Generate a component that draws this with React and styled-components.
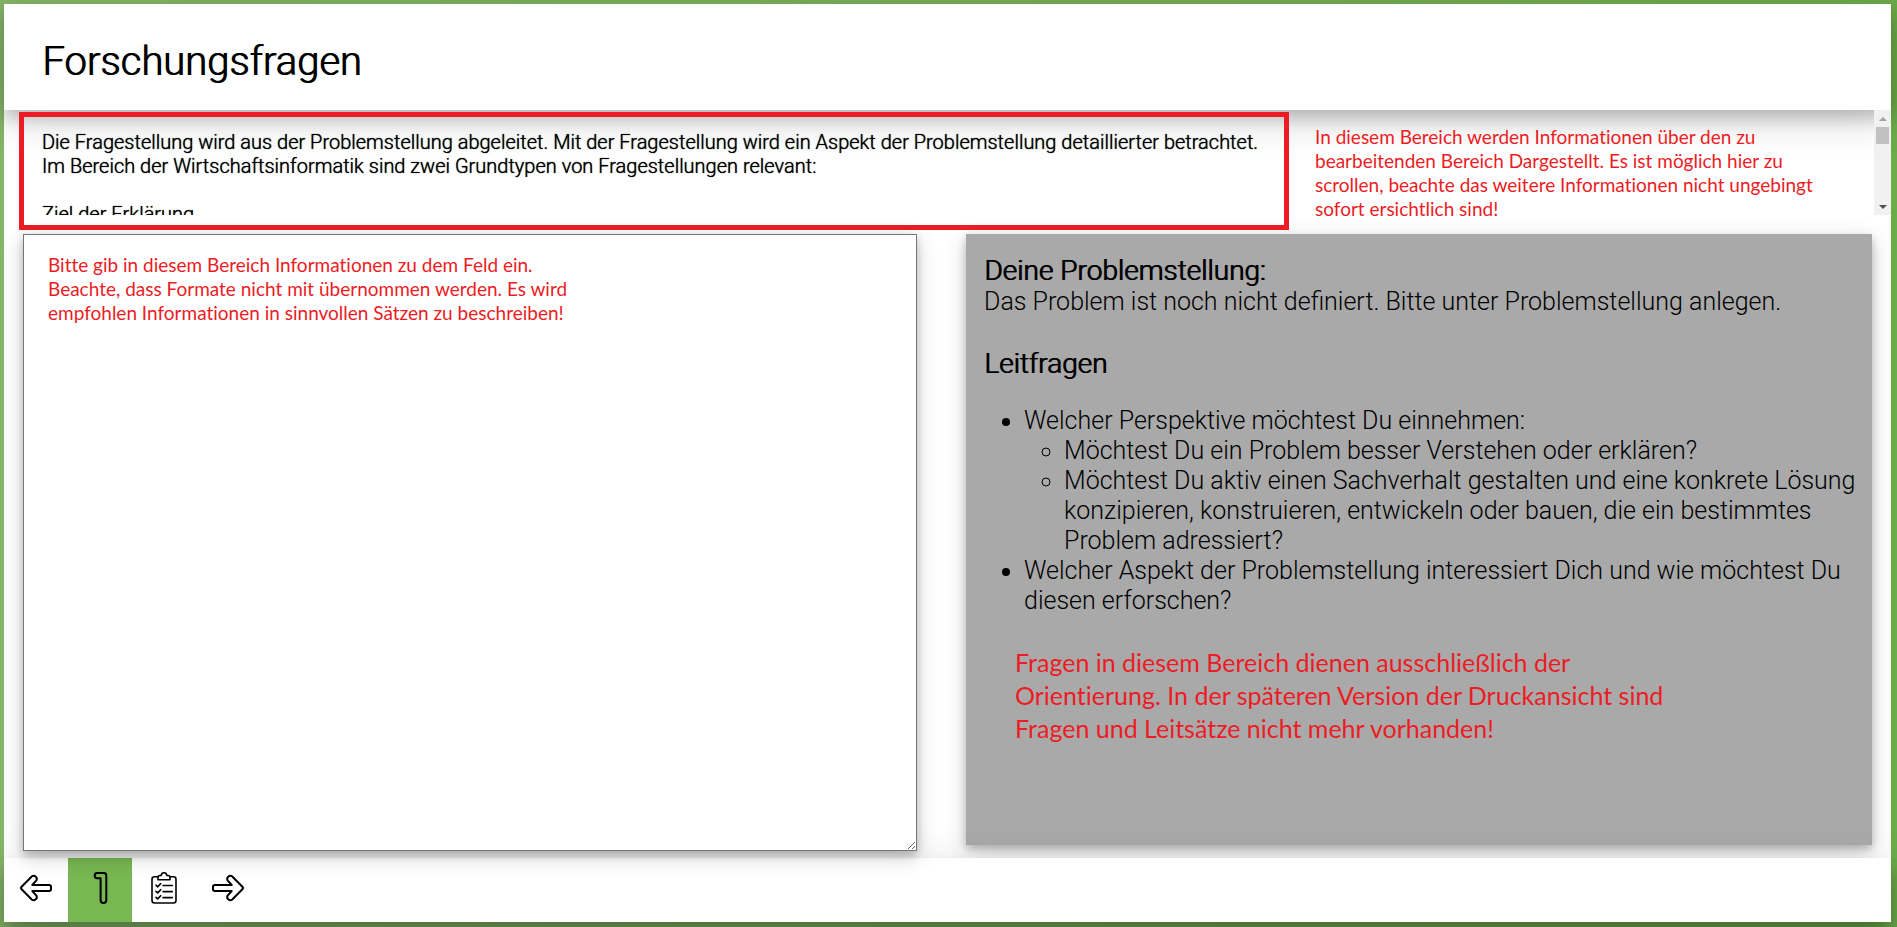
import React from "react";
import styled, { createGlobalStyle } from "styled-components";

const RED = "#ed1c24";
const softShadow = "0 4px 8px 0 rgba(0,0,0,0.2), 0 6px 20px 0 rgba(0,0,0,0.19)";
const headerShadow = "0 8px 16px 0 rgba(0,0,0,0.2), 0 12px 40px 0 rgba(0,0,0,0.15)";
const footerShadow = "0 12px 16px 0 rgba(0,0,0,0.24), 0 17px 50px 0 rgba(0,0,0,0.19)";

const GlobalStyle = createGlobalStyle`
  *, *::before, *::after { box-sizing: border-box; }
  body {
    margin: 0;
    font-family: Roboto, "Liberation Sans", sans-serif;
    color: #000;
    background: linear-gradient(to right, #84b568, #6cab4a);
  }
`;

const Page = styled.div`
  height: 100vh;
  padding: 4px 6px 5px 4px;
`;

const Sheet = styled.main`
  height: 100%;
  display: grid;
  grid-template-rows: 106px 124px minmax(0, 1fr) 64px;
  background: #fff;
`;

const Header = styled.header`
  display: flex;
  align-items: center;
  padding: 10px 38px 0;
  background: #fff;
  box-shadow: ${headerShadow};
`;

const Title = styled.h1`
  margin: 0;
  font-size: 40px;
  line-height: 48px;
  font-weight: 300;
  text-shadow: 1px 0 0 #000;
`;

const Intro = styled.section`
  position: relative;
`;

const IntroScroll = styled.div`
  height: 105px;
  overflow-y: auto;
  scrollbar-width: none;
  padding: 20px 38px 0;
  font-size: 20px;
  line-height: 24px;
  font-weight: 300;
  text-shadow: 0 0 1px #000;
`;

const IntroText = styled.div`
  min-height: 400px;
  p { margin: 0 0 24px; }
`;

const ScrollTrack = styled.div`
  position: absolute;
  top: 0;
  right: 0;
  width: 17px;
  height: 105px;
  display: flex;
  flex-direction: column;
  align-items: center;
  background: #f1f1f1;
`;

const ScrollArrow = styled.span`
  width: 17px;
  height: 17px;
  display: grid;
  place-items: center;
  margin-top: ${(p) => (p.$down ? "auto" : "0")};

  &::before {
    content: "";
    border: 4px solid transparent;
    border-top: ${(p) => (p.$down ? "4px solid #505050" : "0")};
    border-bottom: ${(p) => (p.$down ? "0" : "4px solid #a3a3a3")};
  }
`;

const ScrollThumb = styled.span`
  width: 13px;
  height: 17px;
  background: #c1c1c1;
`;

const Frame = styled.div`
  position: absolute;
  top: 2px;
  left: 15px;
  width: 1270px;
  height: 118px;
  border: 5px solid ${RED};
  pointer-events: none;
`;

const Note = styled.p`
  margin: 0;
  font-family: Lato, "Liberation Sans", sans-serif;
  font-variant-ligatures: none;
  color: ${RED};
  font-size: ${(p) => (p.$large ? 25 : 19)}px;
  line-height: ${(p) => (p.$large ? 33 : 24)}px;
  font-weight: 400;
`;

const IntroNote = styled(Note)`
  position: absolute;
  top: 15px;
  left: 1311px;
  width: 540px;
`;

const Work = styled.section`
  display: grid;
  grid-template-columns: 894px minmax(0, 1fr);
  gap: 49px;
  padding: 0 19px;
`;

const Answer = styled.textarea`
  position: relative;
  z-index: 1;
  height: 617px;
  padding: 18px 24px;
  border: 1px solid #767676;
  border-radius: 0;
  background: #fff;
  box-shadow: ${softShadow};
  resize: both;
  outline: none;
  font-family: Lato, "Liberation Sans", sans-serif;
  font-variant-ligatures: none;
  font-size: 19px;
  line-height: 24px;
  color: ${RED};
`;

const Guide = styled.aside`
  height: 611px;
  padding: 20px 12px 20px 18px;
  background: #a9a9a9;
  box-shadow: ${softShadow};
  font-size: 25px;
  line-height: 30px;
  font-weight: 300;

  ul { margin: 0; padding-left: 40px; }
`;

const GuideText = styled.p`
  margin: 0;
`;

const GuideTitle = styled.h2`
  margin: ${(p) => (p.$spaced ? "30px 0 26px" : "0")};
  font-size: 28px;
  line-height: 33px;
  font-weight: 300;
  text-shadow: 1px 0 0 #000;
`;

const GuideNote = styled.div`
  padding: 30px 31px 0;
`;

const Footer = styled.nav`
  display: flex;
  background: #fff;
  box-shadow: ${footerShadow};
`;

const NavButton = styled.button`
  width: 64px;
  height: 64px;
  padding: 0 0 4px;
  border: 0;
  display: grid;
  place-items: center;
  background: ${(p) => (p.$active ? "#77b852" : "transparent")};
`;

const Icon = ({ children, weight = 2 }) => (
  <svg width="32" height="32" viewBox="0 0 32 32" fill="none" stroke="#000" strokeWidth={weight} strokeLinecap="round" strokeLinejoin="round" aria-hidden="true">
    {children}
  </svg>
);

const arrow =
  "M1.600 14.700 L11.700 4.500 Q13.700 2.800 15.800 4.700 Q17.800 6.700 16 8.900 L12.300 13 H29.200 Q31 13 31 14.700 V17.300 Q31 19 29.200 19 H12.300 L16 23.100 Q17.800 25.300 15.800 27.300 Q13.700 29.200 11.700 27.500 L1.600 17.300 Q0.500 16 1.600 14.700 Z";

const ArrowLeft = () => <Icon><path d={arrow} /></Icon>;
const ArrowRight = () => <Icon><path d={arrow} transform="matrix(-1 0 0 1 32 0)" /></Icon>;
const NumberOne = () => (
  <Icon>
    <path d="M20 1 H13 C9.900 1 9.900 6.200 13 6.200 H16.600 V28 C16.600 32 22.300 32 22.300 28 V3.500 Q22.300 1 20 1 Z" />
  </Icon>
);
const Clipboard = () => (
  <Icon weight={1.6}>
    <path d="M10 4.700 H6.500 Q4 4.700 4 7.200 V28.500 Q4 31 6.500 31 H25.500 Q28 31 28 28.500 V7.200 Q28 4.700 25.500 4.700 H22" />
    <path d="M10 7.700 V5.500 Q10 3.500 12 3.500 H13.200 Q13.500 0.800 16 0.800 Q18.500 0.800 18.800 3.500 H20 Q22 3.500 22 5.500 V7.700 Z" />
    <path d="M8 13.200 l1.700 1.600 l3 -3.200 M15 13.500 H24.300 M8 19.300 l1.700 1.600 l3 -3.200 M15 19.600 H24.300 M8 25.300 l1.700 1.600 l3 -3.200 M15 25.600 H24.300" />
  </Icon>
);

export default function App() {
  return (
    <>
      <GlobalStyle />
      <Page>
        <Sheet>
          <Header><Title>Forschungsfragen</Title></Header>
          <Intro>
            <IntroScroll tabIndex={0}>
              <IntroText>
                <p>
                  Die Fragestellung wird aus der Problemstellung abgeleitet. Mit der Fragestellung wird ein Aspekt der Problemstellung detaillierter betrachtet.<br />
                  Im Bereich der Wirtschaftsinformatik sind zwei Grundtypen von Fragestellungen relevant:
                </p>
                <p>Ziel der Erklärung</p>
              </IntroText>
            </IntroScroll>
            <ScrollTrack aria-hidden="true">
              <ScrollArrow />
              <ScrollThumb />
              <ScrollArrow $down />
            </ScrollTrack>
            <Frame />
            <IntroNote>
              In diesem Bereich werden Informationen über den zu<br />
              bearbeitenden Bereich Dargestellt. Es ist möglich hier zu<br />
              scrollen, beachte das weitere Informationen nicht ungebingt<br />
              sofort ersichtlich sind!
            </IntroNote>
          </Intro>
          <Work>
            <Answer
              aria-label="Forschungsfragen"
              spellCheck={false}
              defaultValue={"Bitte gib in diesem Bereich Informationen zu dem Feld ein.\nBeachte, dass Formate nicht mit übernommen werden. Es wird\nempfohlen Informationen in sinnvollen Sätzen zu beschreiben!"}
            />
            <Guide>
              <GuideTitle>Deine Problemstellung:</GuideTitle>
              <GuideText>Das Problem ist noch nicht definiert. Bitte unter Problemstellung anlegen.</GuideText>
              <GuideTitle $spaced>Leitfragen</GuideTitle>
              <ul>
                <li>
                  Welcher Perspektive möchtest Du einnehmen:
                  <ul>
                    <li>Möchtest Du ein Problem besser Verstehen oder erklären?</li>
                    <li>Möchtest Du aktiv einen Sachverhalt gestalten und eine konkrete Lösung konzipieren, konstruieren, entwickeln oder bauen, die ein bestimmtes Problem adressiert?</li>
                  </ul>
                </li>
                <li>Welcher Aspekt der Problemstellung interessiert Dich und wie möchtest Du diesen erforschen?</li>
              </ul>
              <GuideNote>
                <Note $large>
                  Fragen in diesem Bereich dienen ausschließlich der<br />
                  Orientierung. In der späteren Version der Druckansicht sind<br />
                  Fragen und Leitsätze nicht mehr vorhanden!
                </Note>
              </GuideNote>
            </Guide>
          </Work>
          <Footer aria-label="Navigation">
            <NavButton type="button" aria-label="Zurück"><ArrowLeft /></NavButton>
            <NavButton type="button" $active aria-label="Schritt 1"><NumberOne /></NavButton>
            <NavButton type="button" aria-label="Aufgaben"><Clipboard /></NavButton>
            <NavButton type="button" aria-label="Weiter"><ArrowRight /></NavButton>
          </Footer>
        </Sheet>
      </Page>
    </>
  );
}
